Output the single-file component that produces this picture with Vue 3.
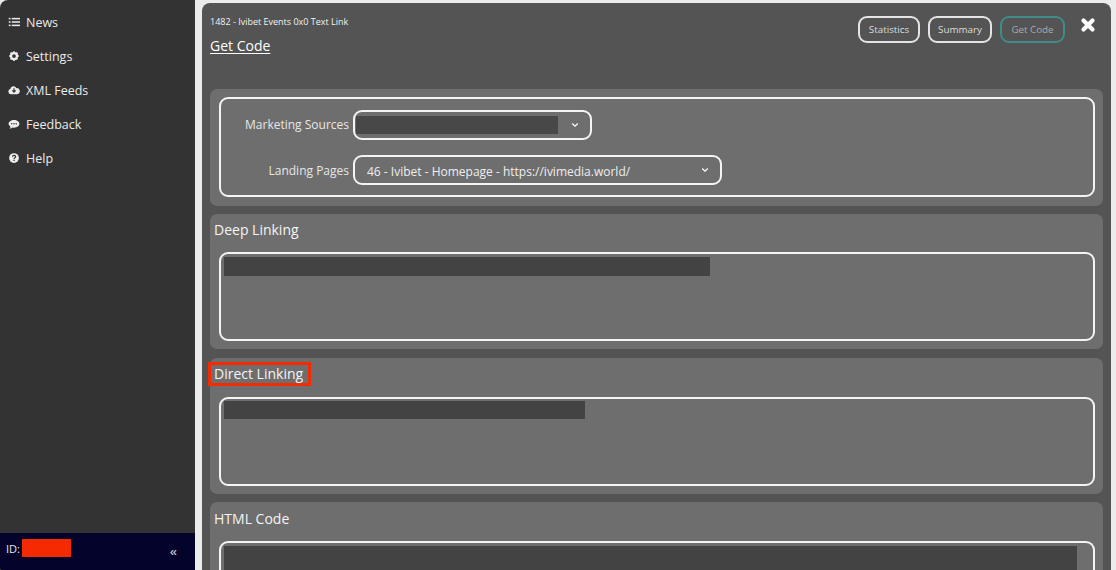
<script setup>
const navItems = [
  { label: 'News', icon: 'list' },
  { label: 'Settings', icon: 'cog' },
  { label: 'XML Feeds', icon: 'cloud' },
  { label: 'Feedback', icon: 'comment' },
  { label: 'Help', icon: 'help' },
]
const linkSections = [
  { title: 'Deep Linking', redact: 486, marked: false },
  { title: 'Direct Linking', redact: 361, marked: true },
]
</script>

<template>
  <div class="app">
    <aside class="sidebar">
      <nav class="nav">
        <a v-for="item in navItems" :key="item.label" class="nav-item">
          <svg class="nav-icon" viewBox="0 0 16 16" aria-hidden="true">
            <g v-if="item.icon === 'list'" fill="#eee">
              <rect x="1" y="2.500" width="2.400" height="2" />
              <rect x="1" y="7" width="2.400" height="2" />
              <rect x="1" y="11.500" width="2.400" height="2" />
              <rect x="5" y="2.500" width="11" height="2" />
              <rect x="5" y="7" width="11" height="2" />
              <rect x="5" y="11.500" width="11" height="2" />
            </g>
            <g v-else-if="item.icon === 'cog'">
              <circle cx="8" cy="8" r="4" fill="none" stroke="#eee" stroke-width="3" />
              <path d="M8 1.500v13M1.500 8h13M3.400 3.400l9.200 9.200M12.600 3.400l-9.200 9.200" stroke="#eee" stroke-width="2.200" stroke-dasharray="2.400 8.200" />
            </g>
            <g v-else-if="item.icon === 'cloud'">
              <path d="M4 13.500a3.400 3.400 0 0 1-.9-6.700 4.200 4.200 0 0 1 8-1.300 3.900 3.900 0 0 1 1.200 8z" fill="#eee" />
              <path d="M8 5.500v5M5.800 8.600 8 10.900l2.200-2.300" fill="none" stroke="#333" stroke-width="1.600" />
            </g>
            <g v-else-if="item.icon === 'comment'">
              <path d="M8 2.500c4 0 7.200 2.300 7.200 5.200S12 12.900 8 12.900c-.7 0-1.300 0-2-.2-1 .9-2.400 1.500-4 1.600.8-.8 1.300-1.700 1.400-2.700C1.800 10.600.8 9.200.8 7.700.8 4.800 4 2.500 8 2.500z" fill="#eee" />
              <circle cx="5" cy="7.700" r="1" fill="#333" />
              <circle cx="8" cy="7.700" r="1" fill="#333" />
              <circle cx="11" cy="7.700" r="1" fill="#333" />
            </g>
            <g v-else>
              <circle cx="8" cy="8" r="6.500" fill="#eee" />
              <path d="M5.900 6.400c.1-1.300 1-2 2.200-2 1.200 0 2.100.8 2.100 1.800 0 1.500-2.100 1.500-2.100 3" fill="none" stroke="#333" stroke-width="1.600" />
              <rect x="7.200" y="10.300" width="1.700" height="1.700" fill="#333" />
            </g>
          </svg>
          <span>{{ item.label }}</span>
        </a>
      </nav>
      <footer class="sidebar-foot">
        <span class="id-label">ID:</span>
        <span class="id-mask"></span>
        <span class="collapse">«</span>
      </footer>
    </aside>

    <main class="main">
      <div class="panel">
        <header class="panel-head">
          <div class="head-text">
            <div class="crumb">1482 - Ivibet Events 0x0 Text Link</div>
            <h1 class="head-title">Get Code</h1>
          </div>
          <div class="head-actions">
            <button class="tab tab-stats">Statistics</button>
            <button class="tab tab-summary">Summary</button>
            <button class="tab tab-active">Get Code</button>
            <svg class="close" viewBox="0 0 16 16" aria-hidden="true">
              <path d="M3.500 3.500l9 9M12.500 3.500l-9 9" stroke="#fff" stroke-width="4.200" stroke-linecap="round" />
            </svg>
          </div>
        </header>

        <section class="section section-form">
          <div class="form-box">
            <div class="form-row">
              <label class="form-label">Marketing Sources</label>
              <div class="select select-sources">
                <span class="mask-select"></span>
                <svg class="chev" viewBox="0 0 10 6" aria-hidden="true"><path d="M1.500 1.200 5 4.500l3.500-3.300" fill="none" stroke="#fff" stroke-width="1.500" /></svg>
              </div>
            </div>
            <div class="form-row">
              <label class="form-label">Landing Pages</label>
              <div class="select select-pages">
                <span class="select-value">46 - Ivibet - Homepage - https://ivimedia.world/</span>
                <svg class="chev" viewBox="0 0 10 6" aria-hidden="true"><path d="M1.500 1.200 5 4.500l3.500-3.300" fill="none" stroke="#fff" stroke-width="1.500" /></svg>
              </div>
            </div>
          </div>
        </section>

        <section v-for="s in linkSections" :key="s.title" class="section" :class="{ 'section-marked': s.marked }">
          <h2 class="section-title" :class="{ marked: s.marked }">{{ s.title }}</h2>
          <div class="code-box">
            <span class="mask" :style="{ width: s.redact + 'px' }"></span>
          </div>
        </section>

        <section class="section section-last">
          <h2 class="section-title title-last">HTML Code</h2>
          <div class="code-box code-box-last">
            <span class="mask mask-full"></span>
          </div>
        </section>
      </div>
    </main>
  </div>
</template>

<style>
html, body { margin: 0; height: 100%; overflow: hidden; background: #ececec; }
</style>

<style scoped>
.app {
  display: flex;
  height: 570px;
  overflow: hidden;
  font-family: "Open Sans", "Noto Sans", sans-serif;
  color: #eee;
}
.sidebar {
  width: 195px;
  flex: none;
  display: flex;
  flex-direction: column;
  background: #333;
  border-top-left-radius: 8px;
}
.nav {
  flex: 1;
  display: flex;
  flex-direction: column;
  padding-top: 5px;
}
.nav-item {
  height: 34px;
  display: flex;
  align-items: center;
  gap: 6px;
  padding-left: 8px;
  font-size: 12.500px;
  color: #eaeaea;
}
.nav-icon { width: 12px; height: 12px; flex: none; }
.sidebar-foot {
  height: 37px;
  display: flex;
  align-items: center;
  background: #03032b;
  padding: 0 18px 0 6px;
  font-size: 11px;
  border-bottom-left-radius: 3px;
}
.id-label { color: #e6e6e6; margin-right: 2px; margin-top: -6px; }
.id-mask { width: 49px; height: 18px; background: #f52a00; margin-top: -8px; }
.collapse { margin-left: auto; color: #bdbdc6; font-size: 13px; font-weight: 600; margin-top: -2px; }

.main {
  flex: 1;
  min-width: 0;
  background: #ececec;
  padding: 3px 5px 0 7px;
}
.panel {
  background: #535453;
  border-radius: 8px 8px 0 0;
  padding: 0 8px;
  height: 100%;
  overflow: hidden;
  box-sizing: border-box;
}
.panel-head {
  height: 86px;
  display: flex;
  justify-content: space-between;
  align-items: flex-start;
}
.crumb {
  font-size: 9px;
  line-height: 12px;
  margin-top: 13px;
  color: #f2f2f2;
}
.head-title {
  margin: 8px 0 0;
  font-size: 14px;
  line-height: 19px;
  font-weight: 400;
  text-decoration: underline;
  text-underline-offset: 2px;
  color: #fff;
}
.head-actions {
  display: flex;
  align-items: center;
  margin-top: 13px;
  margin-right: 7px;
}
.tab {
  height: 27px;
  box-sizing: border-box;
  border: 2px solid #e4e4e4;
  border-radius: 9px;
  background: transparent;
  color: #ddd;
  font: 400 9.800px "Open Sans", sans-serif;
  padding: 0;
  margin-right: 8px;
  text-align: center;
}
.tab-stats { width: 62px; }
.tab-summary { width: 64px; }
.tab-active {
  width: 65px;
  border-color: #3f8c8a;
  color: #aaa;
  margin-right: 15px;
}
.close { width: 16px; height: 16px; margin-top: -9px; }

.section {
  background: #6e6e6e;
  border-radius: 7px;
  margin-bottom: 9px;
  padding: 8px 8px 8px 9px;
  box-sizing: border-box;
}
.section-form { height: 117px; margin-bottom: 8px; }
.section-marked { margin-bottom: 8px; }
.form-box {
  height: 100px;
  box-sizing: border-box;
  border: 2px solid #f4f4f4;
  border-radius: 9px;
  padding-top: 11px;
  display: flex;
  flex-direction: column;
  gap: 15px;
}
.form-row {
  display: flex;
  align-items: center;
  gap: 4px;
  height: 30px;
}
.form-label {
  width: 128px;
  text-align: right;
  font-size: 12px;
  color: #e6e6e6;
  flex: none;
  margin-top: -2px;
}
.form-row + .form-row .form-label { margin-top: 0; }
.select {
  height: 30px;
  box-sizing: border-box;
  border: 2px solid #f4f4f4;
  border-radius: 9px;
  display: flex;
  align-items: center;
  justify-content: space-between;
  padding-right: 11px;
}
.select-sources { width: 239px; padding-left: 1px; }
.select-pages { width: 369px; padding-left: 12px; }
.select-value { font-size: 12px; color: #eee; margin-top: 2px; }
.mask-select { width: 202px; height: 18px; background: #484848; }
.chev { width: 8px; height: 6px; flex: none; margin-top: -1px; }

.section-title {
  display: block;
  width: fit-content;
  margin: -2px 0 13px -5px;
  height: 19px;
  line-height: 19px;
  font-size: 14px;
  font-weight: 500;
  color: #f4f4f4;
}
.section-title.marked {
  outline: 3px solid #f52a00;
  padding: 0 5px 0 3px;
  margin-left: -8px;
  margin-bottom: 14px;
  height: 18px;
  line-height: 18px;
  margin-top: -1px;
}
.title-last { margin-top: -1px; margin-bottom: 13px; }
.code-box {
  height: 89px;
  box-sizing: border-box;
  border: 2px solid #f4f4f4;
  border-radius: 9px;
  padding: 3px;
}
.mask {
  display: block;
  height: 19px;
  background: #434343;
}
.section-marked .mask { height: 18px; margin-top: -1px; }
.section-last { padding-bottom: 0; margin-bottom: 0; }
.code-box-last { border-bottom: 0; height: 60px; border-radius: 9px 9px 0 0; }
.mask-full { width: 853px; height: 60px; }
</style>
